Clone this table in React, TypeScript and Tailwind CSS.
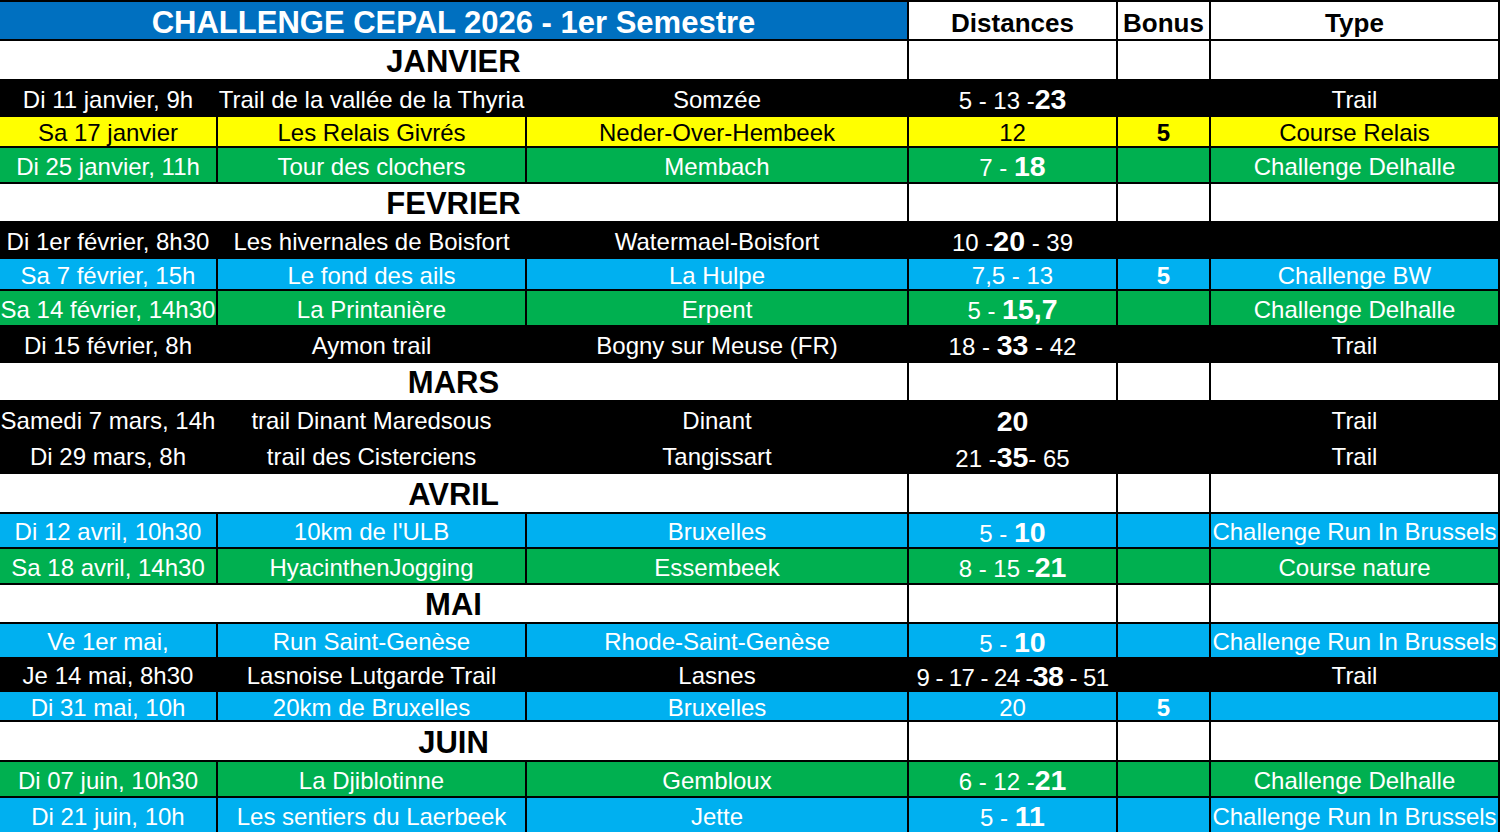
import React from "react";

type Color = "black" | "yellow" | "green" | "blue";

type Row =
  | { kind: "month"; label: string; h: number }
  | {
      kind: "data";
      date: string;
      name: string;
      place: string;
      dist: React.ReactNode;
      bonus?: string;
      type?: string;
      color: Color;
      h: number;
    };

const B = ({ children }: { children: React.ReactNode }) => (
  <b className="text-[28.5px] font-bold">{children}</b>
);

const rows: Row[] = [
  { kind: "month", label: "JANVIER", h: 38 },
  { kind: "data", date: "Di 11 janvier, 9h", name: "Trail de la vallée de la Thyria", place: "Somzée", dist: <>5 - 13 -<B>23</B></>, type: "Trail", color: "black", h: 34 },
  { kind: "data", date: "Sa 17 janvier", name: "Les Relais Givrés", place: "Neder-Over-Hembeek", dist: <>12</>, bonus: "5", type: "Course Relais", color: "yellow", h: 29 },
  { kind: "data", date: "Di 25 janvier, 11h", name: "Tour des clochers", place: "Membach", dist: <>7 - <B>18</B></>, type: "Challenge Delhalle", color: "green", h: 34 },
  { kind: "month", label: "FEVRIER", h: 37 },
  { kind: "data", date: "Di 1er février, 8h30", name: "Les hivernales de Boisfort", place: "Watermael-Boisfort", dist: <>10 -<B>20</B> - 39</>, color: "black", h: 34 },
  { kind: "data", date: "Sa 7 février, 15h", name: "Le fond des ails", place: "La Hulpe", dist: <>7,5 - 13</>, bonus: "5", type: "Challenge BW", color: "blue", h: 30 },
  { kind: "data", date: "Sa 14 février, 14h30", name: "La Printanière", place: "Erpent", dist: <>5 - <B>15,7</B></>, type: "Challenge Delhalle", color: "green", h: 34 },
  { kind: "data", date: "Di 15 février, 8h", name: "Aymon trail", place: "Bogny sur Meuse (FR)", dist: <>18 - <B>33</B> - 42</>, type: "Trail", color: "black", h: 34 },
  { kind: "month", label: "MARS", h: 37 },
  { kind: "data", date: "Samedi 7 mars, 14h", name: "trail Dinant Maredsous", place: "Dinant", dist: <B>20</B>, type: "Trail", color: "black", h: 35 },
  { kind: "data", date: "Di 29 mars, 8h", name: "trail des Cisterciens", place: "Tangissart", dist: <>21 -<B>35</B>- 65</>, type: "Trail", color: "black", h: 33 },
  { kind: "month", label: "AVRIL", h: 38 },
  { kind: "data", date: "Di 12 avril, 10h30", name: "10km de l'ULB", place: "Bruxelles", dist: <>5 - <B>10</B></>, type: "Challenge Run In Brussels", color: "blue", h: 33 },
  { kind: "data", date: "Sa 18 avril, 14h30", name: "HyacinthenJogging", place: "Essembeek", dist: <>8 - 15 -<B>21</B></>, type: "Course nature", color: "green", h: 34 },
  { kind: "month", label: "MAI", h: 37 },
  { kind: "data", date: "Ve 1er mai,", name: "Run Saint-Genèse", place: "Rhode-Saint-Genèse", dist: <>5 - <B>10</B></>, type: "Challenge Run In Brussels", color: "blue", h: 33 },
  { kind: "data", date: "Je 14 mai, 8h30", name: "Lasnoise Lutgarde Trail", place: "Lasnes", dist: <span className="tracking-[-0.6px]">9 - 17 - 24 -<B>38</B> - 51</span>, type: "Trail", color: "black", h: 31 },
  { kind: "data", date: "Di 31 mai, 10h", name: "20km de Bruxelles", place: "Bruxelles", dist: <>20</>, bonus: "5", color: "blue", h: 28 },
  { kind: "month", label: "JUIN", h: 38 },
  { kind: "data", date: "Di 07 juin, 10h30", name: "La Djiblotinne", place: "Gembloux", dist: <>6 - 12 -<B>21</B></>, type: "Challenge Delhalle", color: "green", h: 34 },
  { kind: "data", date: "Di 21 juin, 10h", name: "Les sentiers du Laerbeek", place: "Jette", dist: <>5 - <B>11</B></>, type: "Challenge Run In Brussels", color: "blue", h: 34 },
];

const colorCls: Record<Color, string> = {
  black: "bg-black text-white",
  yellow: "bg-[#ffff00] text-black",
  green: "bg-[#00b050] text-white",
  blue: "bg-[#00b0f0] text-white",
};

const grid =
  "grid grid-cols-[216px_307px_380px_207px_91px_287px] gap-x-[2px]";
const cell =
  "flex items-center justify-center whitespace-nowrap overflow-visible text-[24px] leading-none pt-[3px]";

export default function App() {
  return (
    <div
      className="w-[1500px] h-[832px] overflow-hidden bg-black pt-[2px] pr-[2px] flex flex-col gap-[2px]"
      style={{ fontFamily: '"Liberation Sans", Arial, sans-serif' }}
    >
      {/* Header */}
      <div className={grid + " h-[37px] shrink-0"}>
        <div className="col-span-3 bg-[#0070c0] text-white flex items-center justify-center text-[31px] font-bold leading-none whitespace-nowrap pt-[3px]">
          CHALLENGE CEPAL 2026 - 1er Semestre
        </div>
        <div className="bg-white text-black flex items-center justify-center text-[26px] font-bold leading-none pt-[4px]">
          Distances
        </div>
        <div className="bg-white text-black flex items-center justify-center text-[26px] font-bold leading-none pt-[4px]">
          Bonus
        </div>
        <div className="bg-white text-black flex items-center justify-center text-[26px] font-bold leading-none pt-[4px]">
          Type
        </div>
      </div>

      {rows.map((r, i) => {
        if (r.kind === "month") {
          return (
            <div key={i} className={grid + " shrink-0"} style={{ height: r.h }}>
              <div className="col-span-3 bg-white text-black flex items-center justify-center text-[31px] font-bold leading-none pt-[2px]">
                {r.label}
              </div>
              <div className="bg-white" />
              <div className="bg-white" />
              <div className="bg-white" />
            </div>
          );
        }
        const c = colorCls[r.color];
        return (
          <div key={i} className={grid + " shrink-0"} style={{ height: r.h }}>
            <div className={`${cell} ${c}`}>{r.date}</div>
            <div className={`${cell} ${c}`}>{r.name}</div>
            <div className={`${cell} ${c}`}>{r.place}</div>
            <div className={`${cell} ${c}`}>
              <span className="leading-none">{r.dist}</span>
            </div>
            <div className={`${cell} ${c} font-bold`}>{r.bonus ?? ""}</div>
            <div className={`${cell} ${c}`}>{r.type ?? ""}</div>
          </div>
        );
      })}
    </div>
  );
}
